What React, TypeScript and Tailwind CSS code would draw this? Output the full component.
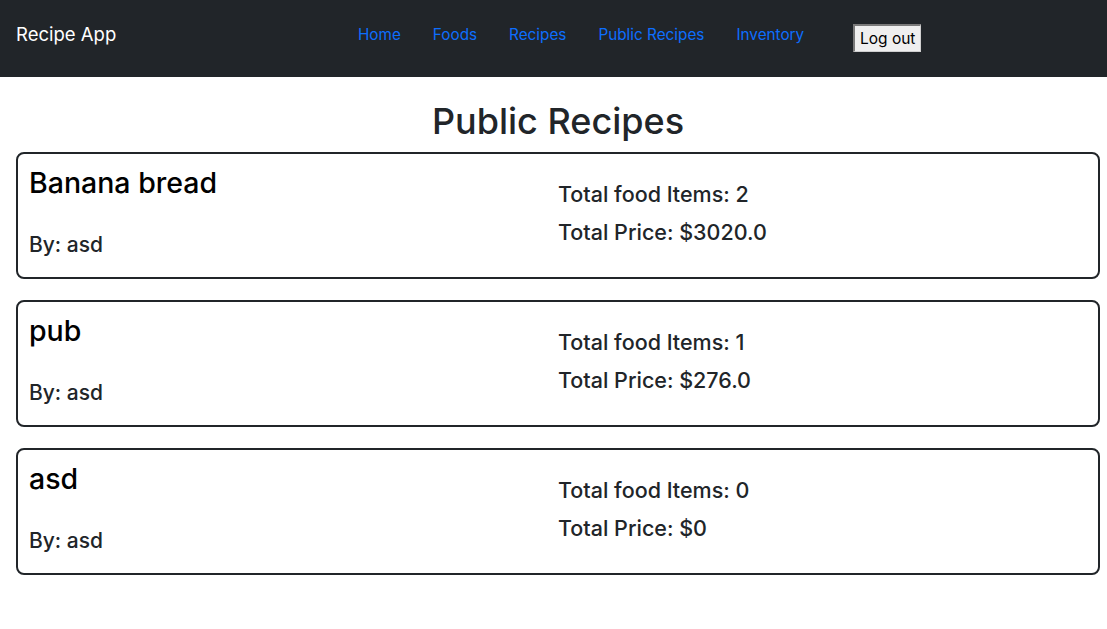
import React from "react"

const recipes = [
	{ name: "Banana bread", user: "asd", items: 2, price: "$3020.0" },
	{ name: "pub", user: "asd", items: 1, price: "$276.0" },
	{ name: "asd", user: "asd", items: 0, price: "$0" },
]

const links = ["Home", "Foods", "Recipes", "Public Recipes", "Inventory"]

function Navbar() {
	return (
		<nav className="flex items-start h-[77px] bg-[#212529] pl-4">
			<a href="#" className="mt-[19px] w-[326px] text-[18.5px] leading-[30px] text-white">
				Recipe App
			</a>
			<ul className="flex items-center mt-[23px]">
				{links.map((l) => (
					<li key={l}>
						<a href="#" className="block px-4 text-[15.3px] leading-6 text-[#0d6efd]">
							{l}
						</a>
					</li>
				))}
			</ul>
			<button className="ml-[33px] mt-[24px] h-[28px] w-[68px] bg-[#efefef] text-black text-[15.5px] leading-none border-t-2 border-l-2 border-r border-b border-t-[#7a7a7a] border-l-[#7a7a7a] border-r-[#cfcfcf] border-b-[#cfcfcf]">
				Log out
			</button>
		</nav>
	)
}

function RecipeCard({ recipe }: { recipe: (typeof recipes)[number] }) {
	return (
		<div className="grid grid-cols-2 border-2 border-[#212529] rounded-lg px-[11px] pt-3 pb-[17px]">
			<div className="flex flex-col">
				<h3 className="text-[28.5px] leading-[34px] text-black font-medium">{recipe.name}</h3>
				<p className="mt-[30px] text-[21px] leading-[30px] font-medium text-[#212529]">By: {recipe.user}</p>
			</div>
			<div className="flex flex-col gap-2 pt-[13px]">
				<p className="text-[21.5px] leading-[30px] font-medium text-[#212529]">Total food Items: {recipe.items}</p>
				<p className="text-[21.5px] leading-[30px] font-medium text-[#212529]">Total Price: {recipe.price}</p>
			</div>
		</div>
	)
}

export default function App() {
	return (
		<div className="min-h-screen bg-white font-['Inter',sans-serif]">
			<Navbar />
			<main className="pl-4 pr-[7px]">
				<h1 className="mt-[22px] mb-[9px] text-center text-[36px] leading-[44px] font-medium text-[#212529]">
					Public Recipes
				</h1>
				<div className="flex flex-col gap-[21px]">
					{recipes.map((r) => (
						<RecipeCard key={r.name} recipe={r} />
					))}
				</div>
			</main>
		</div>
	)
}
